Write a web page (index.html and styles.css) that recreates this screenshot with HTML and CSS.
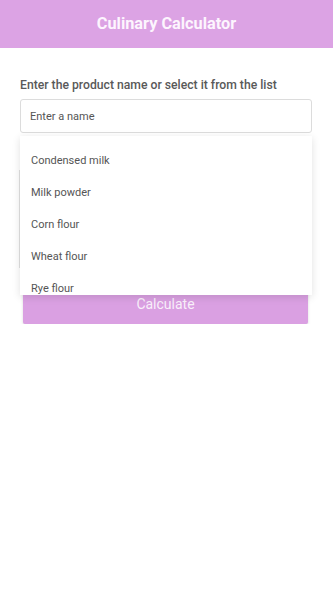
FILE: index.html
```html
<!DOCTYPE html>
<html lang="en">
<head>
    <meta charset="UTF-8">
    <meta name="viewport" content="width=device-width, initial-scale=1.0">
    <title>Culinary Calculator</title>
    <link rel="stylesheet" href="styles.css">
</head>
<body>
    <header class="app-header">
        <h1>Culinary Calculator</h1>
    </header>
    <div class="container">
        <label class="product-label" for="product">Enter the product name or select it from the list</label>
        <div class="product-field">
            <input type="text" id="product" class="product-input" placeholder="Enter a name" autofocus>
            <ul class="product-list">
                <li>Condensed milk</li>
                <li>Milk powder</li>
                <li>Corn flour</li>
                <li>Wheat flour</li>
                <li>Rye flour</li>
            </ul>
        </div>
        <div class="amount-group"></div>
        <button type="button" class="calc-button">Calculate</button>
    </div>
</body>
</html>
```

FILE: styles.css
```css
body {
    font-family: Roboto, "Liberation Sans", sans-serif;
    margin: 0;
    padding: 0;
    background-color: #fff;
}
.app-header {
    height: 48px;
    background-color: #dca3e4;
    text-align: center;
}
.app-header h1 {
    margin: 0;
    line-height: 47px;
    font-size: 16.3px;
    font-weight: bold;
    color: #fdf5fe;
}
.container {
    padding: 29px 21px 0 20px;
}
.product-label {
    display: block;
    font-size: 12.2px;
    font-weight: 500;
    color: #595959;
    line-height: 16px;
    margin-bottom: 6px;
}
.product-field {
    position: relative;
}
.product-input {
    display: block;
    width: 100%;
    height: 34px;
    padding: 0 9px;
    border: 1px solid #dcdcdc;
    border-radius: 3px;
    box-sizing: border-box;
    font-family: inherit;
    font-size: 11px;
    color: #555;
    outline: none;
    caret-color: #4a7dd6;
}
.product-input::placeholder {
    color: #555;
}
.product-list {
    position: absolute;
    top: 37px;
    left: 0;
    right: 0;
    height: 159px;
    box-sizing: border-box;
    margin: 0;
    padding: 9px 0 0;
    list-style: none;
    background-color: #fff;
    box-shadow: 0 2px 8px rgba(0,0,0,0.12);
    overflow: hidden;
    z-index: 2;
}
.product-list li {
    height: 32px;
    line-height: 32px;
    padding-left: 11px;
    font-size: 11px;
    color: #555;
}
.amount-group {
    margin-top: 37px;
    height: 98px;
    border-left: 1px solid #e2e2e2;
    margin-left: -1px;
}
.calc-button {
    display: block;
    width: calc(100% - 7px);
    height: 40px;
    margin: 16px 4px 0 3px;
    border: none;
    border-radius: 2px;
    background-color: #daa0e2;
    color: rgba(255,255,255,0.85);
    font-family: inherit;
    font-size: 14px;
    box-shadow: 0 1px 3px rgba(0,0,0,0.15);
}
```
